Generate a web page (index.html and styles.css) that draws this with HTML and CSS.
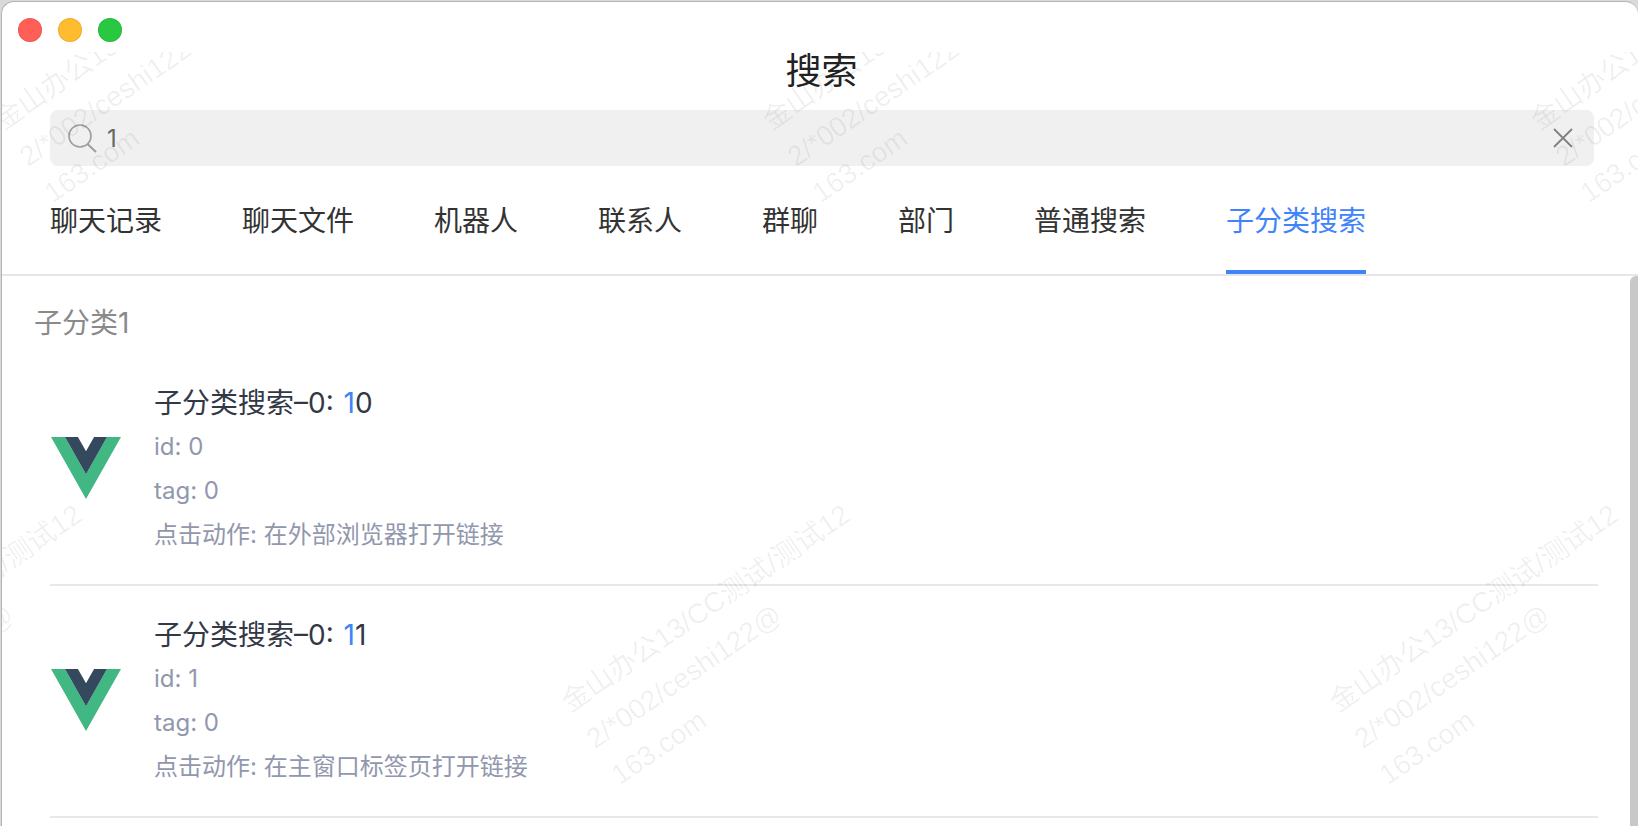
FILE: index.html
```html
<!DOCTYPE html>
<html lang="zh-CN">
<head>
<meta charset="utf-8">
<title>搜索</title>
<link rel="stylesheet" href="styles.css">
</head>
<body>
<div class="window">
  <div class="traffic">
    <span class="dot dot-red"></span>
    <span class="dot dot-yellow"></span>
    <span class="dot dot-green"></span>
  </div>
  <header class="titlebar">搜索</header>
  <div class="searchbar">
    <svg class="icon-search" viewBox="0 0 34 34" width="34" height="34"><circle cx="13" cy="13" r="11" fill="none" stroke="#9c9ca4" stroke-width="1.6"/><path d="M20.5 21 L29 29" fill="none" stroke="#9c9ca4" stroke-width="2"/></svg>
    <span class="query">1</span>
    <svg class="icon-close" viewBox="0 0 20 20" width="20" height="20"><path d="M1 1 L19 19 M19 1 L1 19" fill="none" stroke="#808080" stroke-width="1.8"/></svg>
  </div>
  <nav class="tabs">
    <span class="tab">聊天记录</span>
    <span class="tab">聊天文件</span>
    <span class="tab">机器人</span>
    <span class="tab">联系人</span>
    <span class="tab">群聊</span>
    <span class="tab">部门</span>
    <span class="tab">普通搜索</span>
    <span class="tab tab-active">子分类搜索</span>
  </nav>
  <main class="results">
    <h2 class="section-title">子分类1</h2>
    <article class="row">
      <svg class="logo" viewBox="0 0 256 221" preserveAspectRatio="none" width="70" height="62"><path fill="#41B883" d="M0 0 L128 221 L256 0 L204.8 0 L128 132.6 L51.2 0 Z"/><path fill="#35495E" d="M51.2 0 L128 132.6 L204.8 0 L157.6 0 L128 51.2 L98.4 0 Z"/></svg>
      <div class="info">
        <div class="name">子分类搜索–0: <em class="hit">1</em>0</div>
        <div class="meta">id: 0</div>
        <div class="meta">tag: 0</div>
        <div class="meta">点击动作: 在外部浏览器打开链接</div>
      </div>
    </article>
    <article class="row">
      <svg class="logo" viewBox="0 0 256 221" preserveAspectRatio="none" width="70" height="62"><path fill="#41B883" d="M0 0 L128 221 L256 0 L204.8 0 L128 132.6 L51.2 0 Z"/><path fill="#35495E" d="M51.2 0 L128 132.6 L204.8 0 L157.6 0 L128 51.2 L98.4 0 Z"/></svg>
      <div class="info">
        <div class="name">子分类搜索–0: <em class="hit">1</em>1</div>
        <div class="meta">id: 1</div>
        <div class="meta">tag: 0</div>
        <div class="meta">点击动作: 在主窗口标签页打开链接</div>
      </div>
    </article>
    <div class="scrollbar"></div>
  </main>
  <svg class="watermark" viewBox="0 52 1638 774">
    <defs>
      <g id="wm">
        <text x="0" y="0">金山办公13/CC测试/测试12</text>
        <text x="0" y="44">2/*002/ceshi122@</text>
        <text x="0" y="88">163.com</text>
      </g>
    </defs>
    <use href="#wm" transform="translate(3 131) rotate(-34.5)"/>
    <use href="#wm" transform="translate(771 131) rotate(-34.5)"/>
    <use href="#wm" transform="translate(1539 131) rotate(-34.5)"/>
    <use href="#wm" transform="translate(-198 713) rotate(-34.5)"/>
    <use href="#wm" transform="translate(570 713) rotate(-34.5)"/>
    <use href="#wm" transform="translate(1338 713) rotate(-34.5)"/>
  </svg>
</div>
</body>
</html>
```
FILE: styles.css
```css
* { box-sizing: border-box; }
html, body { margin: 0; padding: 0; height: 100%; overflow: hidden; background: #d9d9d9; }
body { font-family: Inter, "Noto Sans CJK SC", sans-serif; }

.window {
  position: relative;
  height: 826px;
  margin-left: 1px;
  margin-top: 1px;
  background: #fff;
  border-top: 1px solid #b4b4b4;
  border-left: 1px solid #b4b4b4;
  border-radius: 13px 13px 0 0;
  overflow: hidden;
}

.traffic { position: absolute; left: 16px; top: 16px; display: flex; gap: 16px; }
.dot { width: 24px; height: 24px; border-radius: 50%; border: 1px solid rgba(0,0,0,.08); }
.dot-red { background: #ff5f57; }
.dot-yellow { background: #febc2e; }
.dot-green { background: #28c840; }

.titlebar {
  height: 108px;
  padding-top: 45px;
  margin-left: 3px;
  text-align: center;
  font-size: 36px;
  line-height: 48px;
  color: #222;
}

.searchbar {
  display: flex;
  align-items: center;
  height: 56px;
  margin: 0 44px 0 48px;
  padding: 0 21px 0 17px;
  background: #f0f0f0;
  border-radius: 8px;
}
.icon-search { flex: none; margin-top: 4px; }
.query { flex: 1; margin-left: 6px; font-size: 24px; line-height: 30px; margin-top: 1px; color: #666; }
.icon-close { flex: none; }

.tabs {
  display: flex;
  gap: 80px;
  height: 110px;
  padding-left: 48px;
  border-bottom: 2px solid #e5e5ea;
}
.tab {
  height: 108px;
  padding-top: 1px;
  line-height: 108px;
  font-size: 28px;
  color: #333;
}
.tab-active { color: #4083fb; border-bottom: 4px solid #4083fb; }

.results { position: relative; height: 550px; padding-top: 25px; }
.section-title {
  margin: 0 0 9px 32px;
  font-size: 28px;
  font-weight: 400;
  line-height: 44px;
  color: #8a8a8a;
}
.row {
  display: flex;
  align-items: center;
  margin: 0 40px 0 48px;
  padding: 27px 0;
  border-bottom: 2px solid #e8e8e8;
}
.logo { flex: none; margin: 0 0 2px 1px; }
.info { margin-left: 33px; }
.name { font-size: 28px; line-height: 44px; word-spacing: 2px; color: #333846; }
.hit { font-style: normal; color: #4083fb; }
.meta { font-size: 24px; line-height: 44px; color: #9197ad; }

.scrollbar {
  position: absolute;
  right: 0;
  top: 0;
  width: 8px;
  height: 100%;
  background: #c8c8c8;
  border-radius: 6px 0 0 0;
}

.watermark {
  position: absolute;
  left: -2px;
  top: 50px;
  width: 1638px;
  height: 774px;
  overflow: hidden;
  pointer-events: none;
  font-family: "Liberation Sans", "Noto Sans CJK SC", sans-serif;
  font-size: 28px;
  fill: rgba(0,0,0,.065);
}
```
